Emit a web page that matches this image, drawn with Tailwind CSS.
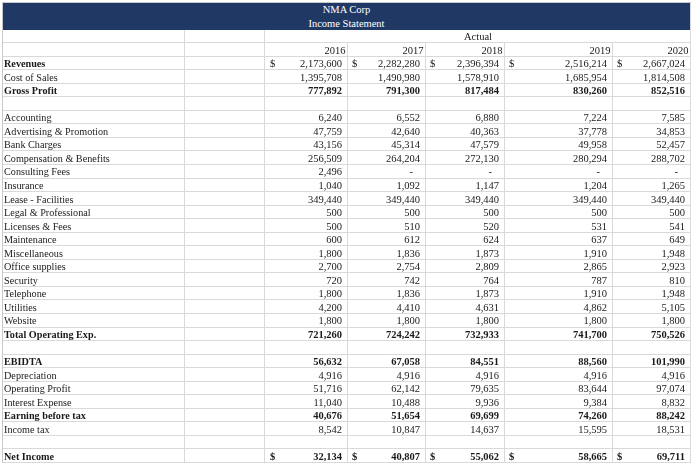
<!DOCTYPE html>
<html>
<head>
<meta charset="utf-8">
<script src="https://cdn.jsdelivr.net/npm/@tailwindcss/browser@4"></script>
</head>
<body class="bg-white">
<div class="w-[697px] h-[466px] overflow-hidden pt-[2px] pl-[2px] font-['Liberation_Serif',serif] text-[10.5px] leading-[13px] text-[#1a1a1a] blur-[0.3px]">
  <div class="w-[689px] border-t border-l border-[#c8c8c8]">
    <div class="bg-[#1f3864] text-white text-center h-[26.5px] border-r border-[#d9d9d9]">
      <div class="h-[13.5px]">NMA Corp</div>
      <div class="h-[13px]">Income Statement</div>
    </div>
    <div class="grid grid-cols-[182px_80px_83px_78px_79px_108px_78px] auto-rows-[13.55px] text-right [&>div>div]:border-r [&>div>div]:border-b [&>div>div]:border-[#d9d9d9] [&>div>div]:pr-[5px] [&>div>div]:pt-[0.5px] [&>div>div]:whitespace-nowrap [&>div>div]:overflow-hidden [&>div>div:first-child]:text-left [&>div>div:first-child]:pl-[1px] [&>div>div:first-child]:text-[10.2px]">
      <div class="grid grid-cols-subgrid col-span-7"><div></div><div></div><div class="col-span-5 !text-center !pr-0 !pl-[1px] !pt-0">Actual</div></div>
      <div class="grid grid-cols-subgrid col-span-7 [&>div]:!pr-[1.5px]"><div></div><div></div><div>2016</div><div>2017</div><div>2018</div><div>2019</div><div>2020</div></div>
      <div class="grid grid-cols-subgrid col-span-7 font-bold"><div>Revenues</div><div></div><div class="flex justify-between font-normal pl-[5px]"><span>$</span><span>2,173,600</span></div><div class="flex justify-between font-normal pl-[4px]"><span>$</span><span>2,282,280</span></div><div class="flex justify-between font-normal pl-[4px]"><span>$</span><span>2,396,394</span></div><div class="flex justify-between font-normal pl-[4px]"><span>$</span><span>2,516,214</span></div><div class="flex justify-between font-normal pl-[4px]"><span>$</span><span>2,667,024</span></div></div>
      <div class="grid grid-cols-subgrid col-span-7"><div>Cost of Sales</div><div></div><div>1,395,708</div><div>1,490,980</div><div>1,578,910</div><div>1,685,954</div><div>1,814,508</div></div>
      <div class="grid grid-cols-subgrid col-span-7 font-bold"><div>Gross Profit</div><div></div><div>777,892</div><div>791,300</div><div>817,484</div><div>830,260</div><div>852,516</div></div>
      <div class="grid grid-cols-subgrid col-span-7"><div></div><div></div><div></div><div></div><div></div><div></div><div></div></div>
      <div class="grid grid-cols-subgrid col-span-7"><div>Accounting</div><div></div><div>6,240</div><div>6,552</div><div>6,880</div><div>7,224</div><div>7,585</div></div>
      <div class="grid grid-cols-subgrid col-span-7"><div>Advertising &amp; Promotion</div><div></div><div>47,759</div><div>42,640</div><div>40,363</div><div>37,778</div><div>34,853</div></div>
      <div class="grid grid-cols-subgrid col-span-7"><div>Bank Charges</div><div></div><div>43,156</div><div>45,314</div><div>47,579</div><div>49,958</div><div>52,457</div></div>
      <div class="grid grid-cols-subgrid col-span-7"><div>Compensation &amp; Benefits</div><div></div><div>256,509</div><div>264,204</div><div>272,130</div><div>280,294</div><div>288,702</div></div>
      <div class="grid grid-cols-subgrid col-span-7"><div>Consulting Fees</div><div></div><div>2,496</div><div class="!pr-[12px]">-</div><div class="!pr-[12px]">-</div><div class="!pr-[12px]">-</div><div class="!pr-[12px]">-</div></div>
      <div class="grid grid-cols-subgrid col-span-7"><div>Insurance</div><div></div><div>1,040</div><div>1,092</div><div>1,147</div><div>1,204</div><div>1,265</div></div>
      <div class="grid grid-cols-subgrid col-span-7"><div>Lease - Facilities</div><div></div><div>349,440</div><div>349,440</div><div>349,440</div><div>349,440</div><div>349,440</div></div>
      <div class="grid grid-cols-subgrid col-span-7"><div>Legal &amp; Professional</div><div></div><div>500</div><div>500</div><div>500</div><div>500</div><div>500</div></div>
      <div class="grid grid-cols-subgrid col-span-7"><div>Licenses &amp; Fees</div><div></div><div>500</div><div>510</div><div>520</div><div>531</div><div>541</div></div>
      <div class="grid grid-cols-subgrid col-span-7"><div>Maintenance</div><div></div><div>600</div><div>612</div><div>624</div><div>637</div><div>649</div></div>
      <div class="grid grid-cols-subgrid col-span-7"><div>Miscellaneous</div><div></div><div>1,800</div><div>1,836</div><div>1,873</div><div>1,910</div><div>1,948</div></div>
      <div class="grid grid-cols-subgrid col-span-7"><div>Office supplies</div><div></div><div>2,700</div><div>2,754</div><div>2,809</div><div>2,865</div><div>2,923</div></div>
      <div class="grid grid-cols-subgrid col-span-7"><div>Security</div><div></div><div>720</div><div>742</div><div>764</div><div>787</div><div>810</div></div>
      <div class="grid grid-cols-subgrid col-span-7"><div>Telephone</div><div></div><div>1,800</div><div>1,836</div><div>1,873</div><div>1,910</div><div>1,948</div></div>
      <div class="grid grid-cols-subgrid col-span-7"><div>Utilities</div><div></div><div>4,200</div><div>4,410</div><div>4,631</div><div>4,862</div><div>5,105</div></div>
      <div class="grid grid-cols-subgrid col-span-7"><div>Website</div><div></div><div>1,800</div><div>1,800</div><div>1,800</div><div>1,800</div><div>1,800</div></div>
      <div class="grid grid-cols-subgrid col-span-7 font-bold"><div>Total Operating Exp.</div><div></div><div>721,260</div><div>724,242</div><div>732,933</div><div>741,700</div><div>750,526</div></div>
      <div class="grid grid-cols-subgrid col-span-7"><div></div><div></div><div></div><div></div><div></div><div></div><div></div></div>
      <div class="grid grid-cols-subgrid col-span-7 font-bold"><div>EBIDTA</div><div></div><div>56,632</div><div>67,058</div><div>84,551</div><div>88,560</div><div>101,990</div></div>
      <div class="grid grid-cols-subgrid col-span-7"><div>Depreciation</div><div></div><div>4,916</div><div>4,916</div><div>4,916</div><div>4,916</div><div>4,916</div></div>
      <div class="grid grid-cols-subgrid col-span-7"><div>Operating Profit</div><div></div><div>51,716</div><div>62,142</div><div>79,635</div><div>83,644</div><div>97,074</div></div>
      <div class="grid grid-cols-subgrid col-span-7"><div>Interest Expense</div><div></div><div>11,040</div><div>10,488</div><div>9,936</div><div>9,384</div><div>8,832</div></div>
      <div class="grid grid-cols-subgrid col-span-7 font-bold"><div>Earning before tax</div><div></div><div>40,676</div><div>51,654</div><div>69,699</div><div>74,260</div><div>88,242</div></div>
      <div class="grid grid-cols-subgrid col-span-7"><div>Income tax</div><div></div><div>8,542</div><div>10,847</div><div>14,637</div><div>15,595</div><div>18,531</div></div>
      <div class="grid grid-cols-subgrid col-span-7"><div></div><div></div><div></div><div></div><div></div><div></div><div></div></div>
      <div class="grid grid-cols-subgrid col-span-7 font-bold"><div>Net Income</div><div></div><div class="flex justify-between pl-[5px]"><span>$</span><span>32,134</span></div><div class="flex justify-between pl-[4px]"><span>$</span><span>40,807</span></div><div class="flex justify-between pl-[4px]"><span>$</span><span>55,062</span></div><div class="flex justify-between pl-[4px]"><span>$</span><span>58,665</span></div><div class="flex justify-between pl-[4px]"><span>$</span><span>69,711</span></div></div>
    </div>
  </div>
</div>
</body>
</html>
